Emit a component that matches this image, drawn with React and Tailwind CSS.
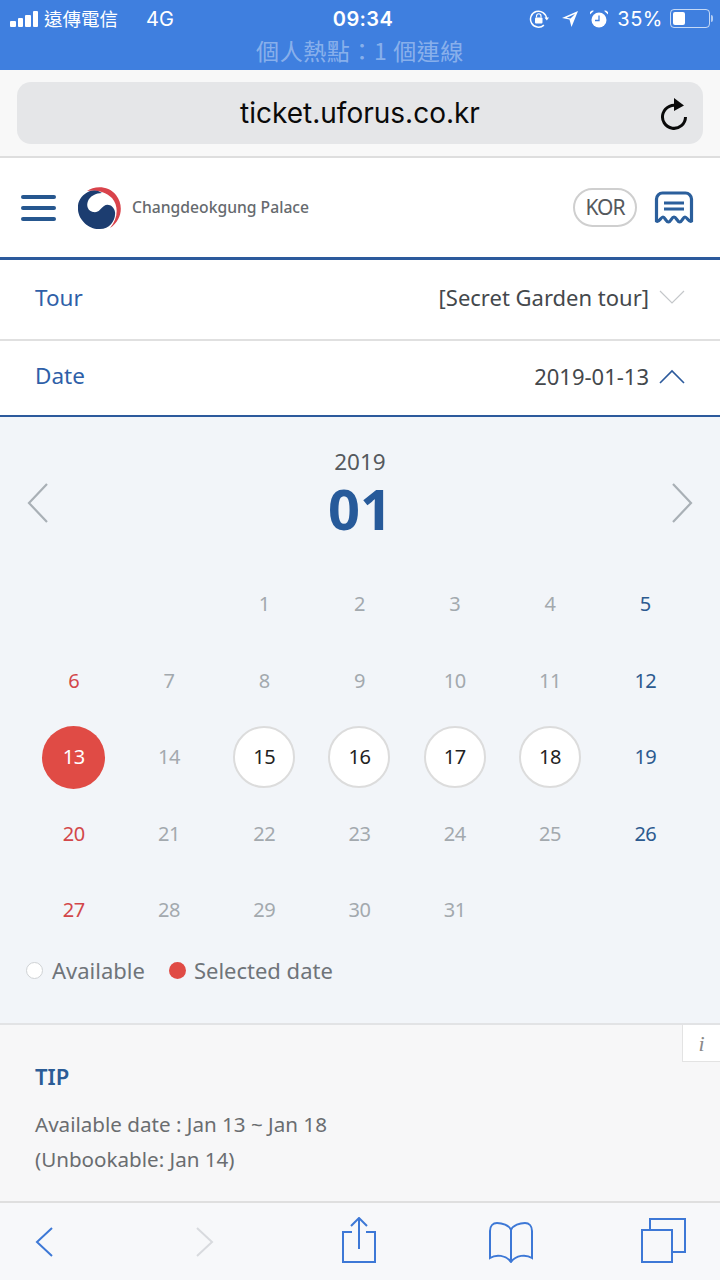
import React from 'react';

const rows = [
  [null, null, 1, 2, 3, 4, 5],
  [6, 7, 8, 9, 10, 11, 12],
  [13, 14, 15, 16, 17, 18, 19],
  [20, 21, 22, 23, 24, 25, 26],
  [27, 28, 29, 30, 31, null, null],
];
const available = [15, 16, 17, 18];

const Chevron = ({ d, className, w = 28, h = 20, sw = 1.5, color = '#a9b0b6' }) => (
  <svg width={w} height={h} viewBox={`0 0 ${w} ${h}`} fill="none" className={className}>
    <path d={d} stroke={color} strokeWidth={sw} />
  </svg>
);

const StatusBar = () => (
  <div className="relative h-[70px] bg-[#3f7fdf] text-white font-['Inter','Noto_Sans_CJK_TC',sans-serif]">
    <div className="flex h-[37px] items-center pl-[10px] pr-[10px]">
      <div className="flex flex-1 items-center">
        <div className="flex items-end gap-[2px]">
          <span className="h-[6px] w-[5.500px] rounded-[1px] bg-white" />
          <span className="h-[9px] w-[5.500px] rounded-[1px] bg-white" />
          <span className="h-[12px] w-[5.500px] rounded-[1px] bg-white" />
          <span className="h-[16px] w-[5.500px] rounded-[1px] bg-white" />
        </div>
        <span className="ml-[6px] text-[18.500px] font-['Noto_Sans_CJK_TC',sans-serif]">遠傳電信</span>
        <span className="ml-[28px] text-[20px]">4G</span>
      </div>
      <span className="ml-[6px] text-[20px] font-semibold tracking-[0.4px]">09:34</span>
      <div className="flex flex-1 items-center justify-end">
        <svg width="20" height="20" viewBox="0 0 20 20" fill="none" className="mr-[12px]">
          <path d="M17.500 9.500a8 8 0 1 0-2.600 6.600" stroke="white" strokeWidth="1.500" />
          <path d="M15.500 8.500h4.500l-2.200 3z" fill="white" />
          <rect x="6" y="8.500" width="7.500" height="6" rx="1" fill="white" />
          <path d="M7.500 8.500V7a2.200 2.200 0 0 1 4.500 0v1.500" stroke="white" strokeWidth="1.200" />
        </svg>
        <svg width="18" height="18" viewBox="0 0 18 18" className="mr-[10px]">
          <path d="M17 1 1 8l7.500 1.500L10.500 17z M14 4 9.500 8.500 5.500 7.700z" fill="white" fillRule="evenodd" />
        </svg>
        <svg width="20" height="20" viewBox="0 0 20 20" className="mr-[8px]">
          <circle cx="10" cy="11" r="7.500" fill="white" />
          <path d="M10 6.500V11.500H6" stroke="#3f7fdf" strokeWidth="1.300" fill="none" />
          <path d="M1 5.500 5 1.800 3 1.500 1 3z M19 5.500 15 1.800 17 1.500 19 3z" fill="white" />
        </svg>
        <span className="text-[20px] tracking-[0.5px]">35%</span>
        <div className="ml-[7px] flex h-[19px] w-[40px] items-center rounded-[4px] border border-white/70 p-[2px]">
          <span className="h-full w-[12px] rounded-[2px] bg-white" />
        </div>
        <span className="ml-[1px] mr-[-3px] h-[7px] w-[2px] rounded-r-sm bg-white/60" />
      </div>
    </div>
    <div className="text-center text-[23px] leading-[26px] tracking-[0.6px] text-white/40 font-['Noto_Sans_CJK_TC',sans-serif]">
      個人熱點：1 個連線
    </div>
  </div>
);

const AddressBar = () => (
  <div className="h-[88px] border-b-2 border-[#dedede] bg-[#f8f8f8] px-[17px] pt-[12px]">
    <div className="relative flex h-[62px] items-center justify-center rounded-[14px] bg-[#e5e6e8] text-[28px] text-[#0a0a0a] font-['Inter',sans-serif]">
      ticket.uforus.co.kr
      <svg width="30" height="34" viewBox="0 0 30 34" fill="none" className="absolute right-[14px] top-[14px]">
        <path d="M20 9.500A11.500 11.500 0 1 0 26.500 20" stroke="#0a0a0a" strokeWidth="3" transform="translate(0 1)" />
        <path d="M15 2 25 9.500 15 15z" fill="#0a0a0a" />
      </svg>
    </div>
  </div>
);

const Logo = () => (
  <svg width="44" height="44" viewBox="0 0 44 44" className="ml-[22px]">
    <path d="M9 5C16 0 30-1 38 9 46 19 44 34 32 42 40 33 41 20 34 12 27 5 17 4 9 5Z" fill="#d9434b" />
    <path d="M12 5C3 9-1 16 0 24 1 35 12 44 22 43 32 43 38 34 37 26 36 20 30 17 26 20 22 23 21 27 15 26 10 25 8 20 10 15 12 10 18 7 24 7 20 4 16 4 12 5Z" fill="#1c3d70" />
  </svg>
);

const Header = () => (
  <div className="flex h-[102px] items-center border-b-[3px] border-[#2c5a9c] bg-white pl-[21px] pr-[26px]">
    <div className="flex w-[35px] flex-col gap-[7px]">
      <span className="h-[4px] rounded-full bg-[#26578f]" />
      <span className="h-[4px] rounded-full bg-[#26578f]" />
      <span className="h-[4px] rounded-full bg-[#26578f]" />
    </div>
    <Logo />
    <span className="ml-[10px] text-[15.700px] font-medium text-[#666a6e] font-['Noto_Sans',sans-serif]">Changdeokgung Palace</span>
    <div className="ml-auto flex h-[39px] w-[64px] items-center justify-center rounded-full border-2 border-[#cfcfcf] text-[21px] tracking-[-1px] text-[#55595e] font-['Noto_Sans',sans-serif]">
      KOR
    </div>
    <svg width="40" height="34" viewBox="0 0 40 34" fill="none" className="ml-[17px]">
      <path d="M2.500 30V8a6 6 0 0 1 6-6h23a6 6 0 0 1 6 6V30C35 32 33 26 31 26 29 26 28 31 25.700 31 23 31 22.500 26 20 26 17.500 26 17 31 14.500 31 12 31 11 26 9 26 7 26 5 32 2.500 30Z" stroke="#2b5f9c" strokeWidth="3.200" />
      <path d="M10 12h20M10 18h20" stroke="#2b5f9c" strokeWidth="3.200" />
    </svg>
  </div>
);

const SelectRow = ({ label, value, open, className }) => (
  <div className={`flex items-center pb-[4px] pl-[35px] pr-[35px] font-['Noto_Sans',sans-serif] ${className}`}>
    <span className="text-[22.500px] text-[#2f5fa8]">{label}</span>
    <span className="ml-auto text-[22px] text-[#44484c]">{value}</span>
    {open ? (
      <Chevron d="M1 15 13 3l12 12" w={26} h={17} sw={1.600} color="#2c5a9c" className="ml-[10px]" />
    ) : (
      <Chevron d="M1 2l12 12L25 2" w={26} h={17} sw={1.200} color="#c4c7ca" className="ml-[10px]" />
    )}
  </div>
);

const DayCell = ({ day, col }) => {
  if (day === null) return <div />;
  let cls = 'text-[#a3a9ae]';
  if (col === 0) cls = 'text-[#d2474a]';
  if (col === 6) cls = 'text-[#2c5a8f]';
  if (available.includes(day)) {
    cls = 'h-[62px] w-[62px] rounded-full border-2 border-[#dcdcdc] bg-white text-[#222222]';
  }
  if (day === 13) cls = 'h-[63px] w-[63px] rounded-full bg-[#e04b45] text-white';
  return (
    <div className="flex items-center justify-center">
      <span className={`flex items-center justify-center text-[20px] tracking-[-0.5px] ${cls}`}>{day}</span>
    </div>
  );
};

const Calendar = () => (
  <div className="h-[608px] border-b-2 border-[#e2e3e5] bg-[#f2f5f9] font-['Noto_Sans',sans-serif]">
    <div className="flex items-start justify-between px-[26px] pt-[30px]">
      <Chevron d="M21 2 3 21l18 19" w={23} h={42} sw={2.200} className="mt-[35px]" />
      <div className="flex flex-col items-center">
        <span className="text-[22.500px] leading-[30px] text-[#55595e]">2019</span>
        <span className="text-[56px] font-bold leading-[62px] text-[#275a9a]">01</span>
      </div>
      <Chevron d="M2 2l18 19L2 40" w={23} h={42} sw={2.200} className="mt-[35px]" />
    </div>
    <div className="mt-[27px] grid grid-cols-7 auto-rows-[76.500px] pl-[26px] pr-[27px]">
      {rows.map((row) =>
        row.map((day, col) => <DayCell key={`${row[2]}-${col}`} day={day} col={col} />)
      )}
    </div>
    <div className="mt-[5px] flex items-center pl-[26px] text-[22px] text-[#6f7479]">
      <span className="h-[17px] w-[17px] rounded-full border border-[#cfd2d5] bg-white" />
      <span className="ml-[9px]">Available</span>
      <span className="ml-[24px] h-[17px] w-[17px] rounded-full bg-[#e04b45]" />
      <span className="ml-[8px]">Selected date</span>
    </div>
  </div>
);

const Tip = () => (
  <div className="relative h-[178px] border-b-2 border-[#dfdfdf] bg-[#f7f7f8] pl-[35px] pt-[36px] font-['Noto_Sans',sans-serif]">
    <div className="absolute right-0 top-0 flex h-[37px] w-[38px] items-center justify-center border-b border-l border-[#e3e3e3] bg-white font-['Liberation_Serif',serif] text-[22px] italic text-[#8a8a8a]">
      i
    </div>
    <h3 className="text-[22px] font-semibold leading-[30px] text-[#2b5c96]">TIP</h3>
    <p className="mt-[16px] text-[20.600px] leading-[35px] text-[#6a6d70]">
      Available date : Jan 13 ~ Jan 18
      <br />
      (Unbookable: Jan 14)
    </p>
  </div>
);

const Toolbar = () => (
  <div className="flex h-[77px] items-end bg-[#f7f8fa] pb-[17px] pl-[35px]">
    <Chevron d="M17 1 2 15l15 14" w={19} h={30} sw={2} color="#3d78d6" className="mb-[6px]" />
    <Chevron d="M2 1l15 14L2 29" w={19} h={30} sw={2} color="#d8dade" className="mb-[6px] ml-[141px]" />
    <svg width="36" height="46" viewBox="0 0 36 46" fill="none" stroke="#3d78d6" strokeWidth="2" className="ml-[127px]">
      <path d="M11 15H2v30h32V15h-9M18 32V2M10 9l8-8 8 8" />
    </svg>
    <svg width="46" height="41" viewBox="0 0 46 41" fill="none" stroke="#3d78d6" strokeWidth="2" className="ml-[111px]">
      <path d="M23 8C21 3 14 1 9 1 5 1 2 4 2 9v27c6-4 16-3 21 4 5-7 15-8 21-4V9c0-5-3-8-7-8-5 0-12 2-14 7ZM23 8v32" />
    </svg>
    <svg width="46" height="45" viewBox="0 0 46 45" fill="none" stroke="#3d78d6" strokeWidth="2" className="ml-[107px]">
      <path d="M1 12h30v32H1z" />
      <path d="M9 12V1h35v33H31" />
    </svg>
  </div>
);

const App = () => (
  <div className="h-[1280px] w-[720px] overflow-hidden bg-white">
    <StatusBar />
    <AddressBar />
    <Header />
    <SelectRow label="Tour" value="[Secret Garden tour]" className="h-[81px] border-b-2 border-[#e0e0e0]" />
    <SelectRow label="Date" value="2019-01-13" open className="h-[76px] border-b-2 border-[#2c5a9c]" />
    <Calendar />
    <Tip />
    <Toolbar />
  </div>
);

export default App;
